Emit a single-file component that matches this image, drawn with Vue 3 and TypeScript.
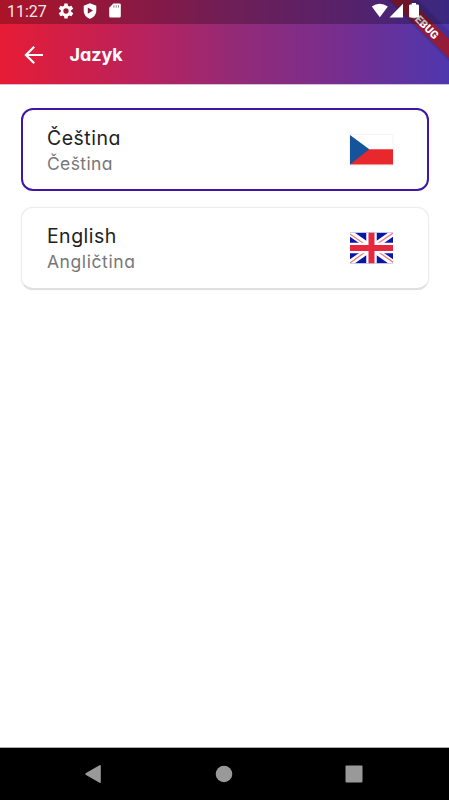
<script setup lang="ts">
import { ref } from 'vue'

interface Language {
  code: 'cs' | 'en'
  name: string
  localName: string
}

const languages: Language[] = [
  { code: 'cs', name: 'Čeština', localName: 'Čeština' },
  { code: 'en', name: 'English', localName: 'Angličtina' },
]
const selected = ref<Language['code']>('cs')
</script>

<template>
  <div class="screen">
    <header class="top">
      <svg class="ribbon" width="70" height="70" viewBox="0 0 70 70">
        <path class="shade" d="M5 -4 L74 65 V35 L35 -4Z" />
        <path class="band" d="M7.500 -4 L74 62.500 V43 L27 -4Z" />
        <text class="debug" x="45.5" y="24.500" transform="rotate(45 45.5 24.5)" dy="4" text-anchor="middle">DEBUG</text>
      </svg>
      <div class="status">
        <span class="time">11:27</span>
        <svg class="gear" width="16" height="16" viewBox="2 2 20 20"><path d="M18.400 13a6.500 6.500 0 0 0 0-2l2.600-1.900-2.200-3.800-2.900 1.200a6.600 6.600 0 0 0-1.600-1L14 2.500h-4l-.4 3a6.600 6.600 0 0 0-1.600 1L5.100 5.300 2.900 9.100 5.600 11a6.500 6.500 0 0 0 0 2l-2.700 1.900 2.200 3.800L8 17.500a6.600 6.600 0 0 0 1.600 1l.4 3h4l.4-3a6.600 6.600 0 0 0 1.600-1l2.900 1.200 2.200-3.800zM12 15.300a3.300 3.300 0 1 1 0-6.600 3.300 3.300 0 0 1 0 6.600z" fill-rule="evenodd" /></svg>
        <svg class="shield" width="14" height="16" viewBox="0 0 14 16"><path fill-rule="evenodd" d="M7 .3 13.300 2.800V7.500C13.300 11.400 10.700 14.700 7 15.700 3.300 14.700.7 11.400.7 7.500V2.800ZM4.800 4.500v6.200L10 7.600Z" /></svg>
        <svg class="card-icon" width="12" height="15" viewBox="0 0 12 15"><path d="M4.300.5H10.500Q11.800.5 11.800 1.800V13Q11.800 14.500 10.500 14.500H1.500Q.2 14.500.2 13V4.700Z" /><path class="pins" d="M4.900 2.300V4.600M7.200 2.300V4.600M9.500 2.300V4.600" /></svg>
        <span class="grow"></span>
        <svg width="51" height="16" viewBox="0 0 51 16">
          <path d="M.8 3.600Q8.500-2.300 16.900 3.600L8.800 14.300Z" />
          <path d="M18.500 14.500 32 .7V14.500Z" />
          <path d="M40.800 0h4.200v1.500h1.800q1.200 0 1.200 1.200v10.600q0 1.200-1.200 1.200h-7.500q-1.200 0-1.200-1.200V2.700q0-1.200 1.200-1.200h1.500z" />
        </svg>
      </div>
      <div class="bar">
        <button class="back" aria-label="Zpět">
          <svg width="20" height="20" viewBox="0 0 20 20"><path d="M19 10H3M10.200 1.700 1.900 10l8.300 8.300" /></svg>
        </button>
        <h1>Jazyk</h1>
      </div>
    </header>

    <main class="list">
      <button
        v-for="lang in languages"
        :key="lang.code"
        class="card"
        :class="{ selected: selected === lang.code }"
        @click="selected = lang.code"
      >
        <span class="labels">
          <span class="name">{{ lang.name }}</span>
          <span class="local" :class="lang.code">{{ lang.localName }}</span>
        </span>
        <svg v-if="lang.code === 'cs'" class="flag" width="45" height="32" viewBox="0 0 45 32">
          <rect x=".5" y=".5" width="43.500" height="31" rx="1" fill="#fff" stroke="#f3f3f3" />
          <path d="M1 15.300H44V30.600H1Z" fill="#e9282d" />
          <path d="M1 1 20.300 15.300 1 30.600Z" fill="#15539b" />
        </svg>
        <svg v-else class="flag" width="45" height="32" viewBox="0 0 45 32">
          <clipPath id="uk"><rect x="1" y=".8" width="43" height="30.500" /></clipPath>
          <g clip-path="url(#uk)">
            <path fill="#0a17a7" d="M0 0h45v32H0z" />
            <path d="M0 .3 45 31.700M45 .3 0 31.700" stroke="#fff" stroke-width="6" />
            <path d="M0 1.300 20 15.300M44.500 .8 25 14M1 31 19 18M26 17.500 45 30.800" stroke="#e6283f" stroke-width="1.300" opacity=".6" />
            <path d="M22.500 0V32M0 16H45" stroke="#fff" stroke-width="10.500" />
            <path d="M22.500 0V32M0 16H45" stroke="#e6273e" stroke-width="6" />
          </g>
        </svg>
      </button>
    </main>

    <nav class="nav">
      <svg width="16" height="20" viewBox="0 0 16 20"><path d="M.3 10Q.3 9.400 1 9L14.500 1.200Q15.800.7 15.800 2V18Q15.800 19.300 14.500 18.800L1 11Q.3 10.600.3 10Z" /></svg>
      <svg class="home" width="18" height="18" viewBox="0 0 18 18"><circle cx="9" cy="9" r="8.300" /></svg>
      <svg width="18" height="18" viewBox="0 0 18 18"><rect x=".5" y=".5" width="17" height="17" rx="1" /></svg>
    </nav>
  </div>
</template>

<style>
body {
  background: #fff;
}
</style>

<style scoped>
.screen {
  display: flex;
  flex-direction: column;
  height: 800px;
  overflow: hidden;
  background: #fff;
  font-family: Inter, sans-serif;
  font-feature-settings: 'cv11' 1;
}
.top {
  position: relative;
  height: 84px;
  background: linear-gradient(90deg, #e71c35 0%, #b8225d 32%, #942a77 52%, #752e90 77%, #4e37ae 100%);
  border-bottom: 1px solid #d9c0dc;
}
.ribbon {
  position: absolute;
  top: 0;
  right: 0;
}
.shade {
  fill: rgba(0, 0, 0, 0.12);
}
.band {
  fill: #941c38;
}
.debug {
  fill: #fff;
  font: 900 11px Roboto, sans-serif;
}
.status {
  position: relative;
  display: flex;
  box-sizing: border-box;
  height: 24px;
  padding: 3px 27px 0 7px;
  background: rgba(0, 0, 0, 0.26);
  fill: #fff;
}
.time {
  width: 51px;
  color: #f5e8ec;
  font: 16px/17px Roboto, sans-serif;
}
.shield {
  margin-left: 9px;
}
.card-icon {
  margin-left: 11.5px;
}
.pins {
  stroke: #9a7385;
  stroke-width: 1;
}
.grow {
  flex: 1;
}
.bar {
  display: flex;
  align-items: center;
  height: 61px;
  padding-left: 24px;
}
.back {
  display: flex;
  padding: 0;
  border: 0;
  background: none;
  fill: none;
  stroke: #fff;
  stroke-width: 2.2;
}
h1 {
  margin: 0 0 0 25.5px;
  color: #fff;
  font-size: 18px;
  font-weight: 700;
  letter-spacing: -0.1px;
}
.list {
  display: flex;
  flex: 1;
  flex-direction: column;
  gap: 16px;
  padding: 23px 20.5px 0;
}
.card {
  display: flex;
  box-sizing: border-box;
  align-items: center;
  justify-content: space-between;
  height: 83px;
  padding: 0 33.5px 1px 25.4px;
  border: 1px solid #ededed;
  border-bottom: 2px solid #e0e0e0;
  border-radius: 12px;
  background: #fff;
  box-shadow: 0 0 1px rgba(0, 0, 0, 0.12);
  font-family: inherit;
  font-feature-settings: inherit;
  text-align: left;
}
.card.selected {
  padding: 0 32.5px 0 24.4px;
  border: 2px solid #4017a4;
  box-shadow: none;
}
.labels {
  display: flex;
  flex-direction: column;
  padding-top: 2px;
}
.name {
  color: #222;
  font-size: 19.5px;
  line-height: 26px;
  letter-spacing: 0.5px;
}
.local {
  color: #777;
  font-size: 17.5px;
  line-height: 26px;
  letter-spacing: 0.4px;
}
.local.en {
  letter-spacing: 0.6px;
}
.nav {
  display: flex;
  box-sizing: border-box;
  align-items: center;
  justify-content: space-between;
  height: 53px;
  padding: 0 86px 0 85px;
  border-top: 1px solid #aaa;
  background: #000;
  fill: #999;
}
.home {
  margin-left: 2px;
}
</style>
